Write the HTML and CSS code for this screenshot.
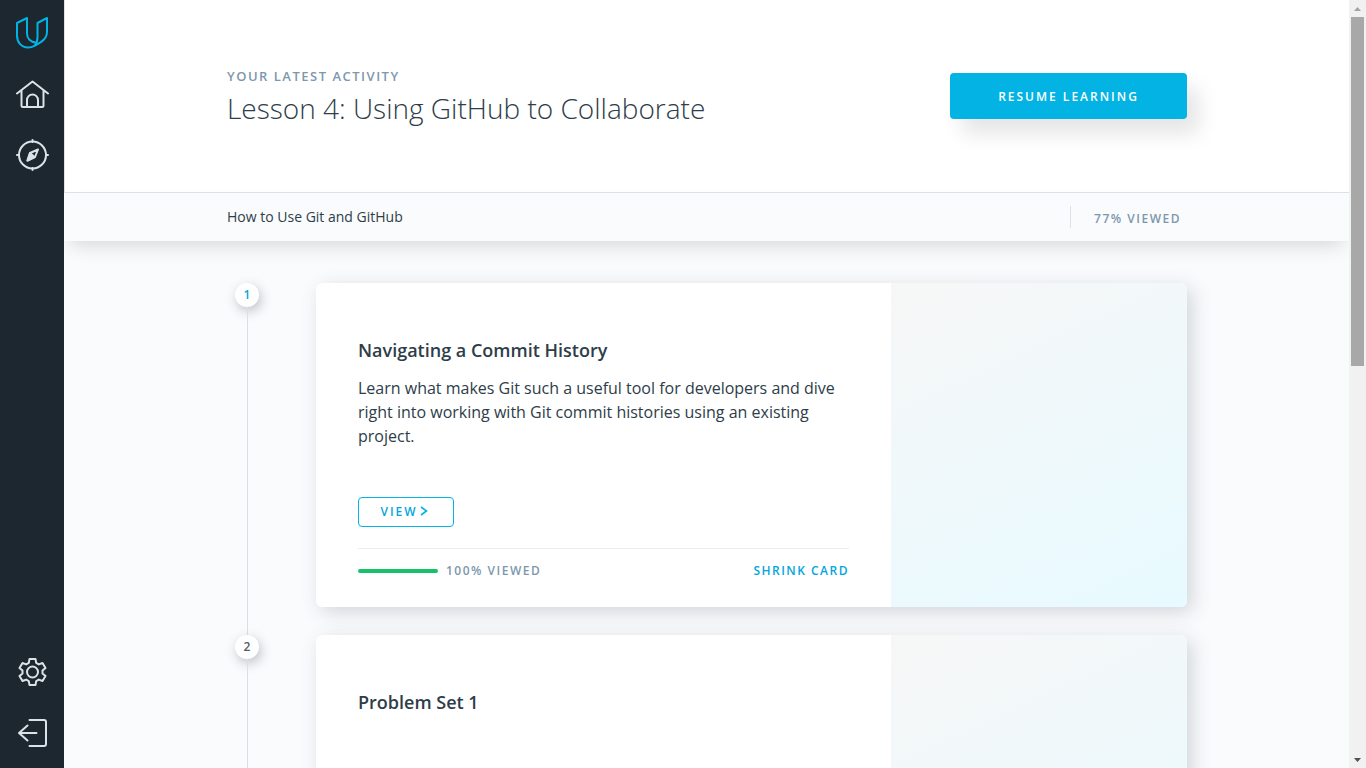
FILE: index.html
```html
<!DOCTYPE html>
<html lang="en">
<head>
<meta charset="utf-8">
<meta name="viewport" content="width=device-width, initial-scale=1">
<title>How to Use Git and GitHub</title>
<link rel="stylesheet" href="styles.css">
</head>
<body>
<div class="app">
  <nav class="sidebar" aria-label="Main">
    <div class="sidebar-group">
      <a class="nav-link logo" href="#" aria-label="Udacity">
        <svg width="34" height="34" viewBox="0 0 34 34"><path d="M2 7 12 2v15.500c0 5 3.500 8.800 9 9M2 7v12.500C2 26.500 6.500 31.500 13 31.500c2.500 0 4.500-.6 6.500-1.700l6-3.500c4-2.400 6.500-6 6.500-10.300V2L22.500 7v14.500c0 3.500-1 6-3 8.300"/></svg>
      </a>
      <a class="nav-link" href="#" aria-label="Home">
        <svg width="34" height="34" viewBox="0 0 34 34"><path d="M2 16.500 17.500 4.500 33 16.500M6.500 13.500v15q0 1.500 1.500 1.500h19q1.500 0 1.500-1.500v-15M12 30v-7a5.500 5.500 0 0 1 11 0v7"/></svg>
      </a>
      <a class="nav-link" href="#" aria-label="Explore">
        <svg width="34" height="34" viewBox="0 0 34 34"><circle cx="17.500" cy="17" r="13.500"/><path d="M17.500 2v2M17.500 30v2M2 17h2M31 17h2"/><path d="M23 11.500 20 19l-7.500 3.500L15 15z"/><path class="solid" d="M12.500 22.500 15 15l4.500 4z"/></svg>
      </a>
    </div>
    <div class="sidebar-group">
      <a class="nav-link" href="#" aria-label="Settings">
        <svg width="34" height="34" viewBox="0 0 34 34"><circle cx="17.500" cy="17" r="5.500"/><path d="M14.500 4h6l.7 3.900 2.600 1.500 3.700-1.400 3 5-3 2.600v2.800l3 2.600-3 5-3.700-1.400-2.600 1.500-.7 3.900h-6l-.7-3.900-2.600-1.500-3.700 1.400-3-5 3-2.600v-2.800l-3-2.600 3-5 3.700 1.400 2.600-1.500z"/></svg>
      </a>
      <a class="nav-link" href="#" aria-label="Sign out">
        <svg width="34" height="34" viewBox="0 0 34 34"><path d="M14.500 4h14.500q2 0 2 2v22q0 2-2 2H14.500M21.500 17H4.500M12.500 9.500 4 17l8.500 7.500"/></svg>
      </a>
    </div>
  </nav>

  <div class="page">
    <header class="hero">
      <div class="container hero-row">
        <div>
          <p class="eyebrow">Your latest activity</p>
          <h1 class="hero-title">Lesson 4: Using GitHub to Collaborate</h1>
        </div>
        <button class="resume" type="button">Resume learning</button>
      </div>
    </header>
    <div class="course-bar">
      <div class="container course-row">
        <h2 class="course-name">How to Use Git and GitHub</h2>
        <span class="course-progress">77% viewed</span>
      </div>
    </div>

    <main class="lessons">
      <div class="container">
        <section class="lesson">
          <div class="step"><span class="step-number step-current">1</span></div>
          <article class="card">
            <div class="card-body">
              <h3 class="card-title">Navigating a Commit History</h3>
              <p class="card-text">Learn what makes Git such a useful tool for developers and dive right into working with Git commit histories using an existing project.</p>
              <button class="view" type="button">View<svg width="8" height="10" viewBox="0 0 8 10"><path d="M1 1l5.500 4L1 9"/></svg></button>
              <footer class="card-footer">
                <span class="meter"></span>
                <span class="viewed">100% viewed</span>
                <button class="shrink" type="button">Shrink card</button>
              </footer>
            </div>
            <div class="card-art"></div>
          </article>
        </section>
        <section class="lesson">
          <div class="step"><span class="step-number">2</span></div>
          <article class="card">
            <div class="card-body">
              <h3 class="card-title">Problem Set 1</h3>
            </div>
            <div class="card-art"></div>
          </article>
        </section>
      </div>
    </main>
  </div>

  <div class="scrollbar" aria-hidden="true">
    <svg class="arrow-up" width="17" height="17" viewBox="0 0 17 17"><path d="M5 11 8.500 7 12 11z"/></svg>
    <div class="track"><div class="thumb"></div></div>
    <svg class="arrow-down" width="17" height="17" viewBox="0 0 17 17"><path d="M5 7h7l-3.500 4z"/></svg>
  </div>
</div>
</body>
</html>
```

FILE: styles.css
```css
* { box-sizing: border-box; }

body {
  margin: 0;
  background: #fafbfd;
  color: #2e3d49;
  font-family: "Open Sans", sans-serif;
  font-size: 16px;
  line-height: 24px;
}

h1, h2, h3, p { margin: 0; }

button {
  font-family: inherit;
  text-transform: uppercase;
  cursor: pointer;
}

svg { display: block; }

.app {
  display: grid;
  grid-template-columns: 64px minmax(0, 1fr) 17px;
  height: 100vh;
  overflow: hidden;
}

/* Sidebar */
.sidebar {
  display: flex;
  flex-direction: column;
  justify-content: space-between;
  padding: 2px 0 5px;
  background: #1d272f;
}

.nav-link {
  display: flex;
  align-items: center;
  justify-content: center;
  height: 61px;
}

.nav-link svg {
  fill: none;
  stroke: #dbe2e8;
  stroke-width: 2;
  stroke-linejoin: round;
  stroke-linecap: round;
}

.logo svg { stroke: #02b3e4; }
.nav-link .solid { fill: #dbe2e8; }

/* Page header */
.page {
  display: flex;
  flex-direction: column;
  min-width: 0;
  overflow: hidden;
}

.container {
  width: 100%;
  max-width: 960px;
  margin: 0 auto;
}

.hero {
  padding: 64px 0;
  background: #fff;
  border-bottom: 1px solid #dbe2e8;
  border-left: 1px solid #dbe2e8;
}

.hero-row {
  display: flex;
  align-items: center;
  justify-content: space-between;
}

.eyebrow {
  color: #7d97ad;
  font-size: 13px;
  font-weight: 600;
  letter-spacing: 1.5px;
  text-transform: uppercase;
}

.hero-title {
  font-size: 28px;
  font-weight: 300;
  line-height: 40px;
}

.resume {
  width: 237px;
  height: 46px;
  border: 0;
  border-radius: 4px;
  background: #02b3e4;
  box-shadow: 12px 15px 20px rgba(0, 0, 0, 0.1);
  color: #fff;
  font-size: 12px;
  font-weight: 600;
  letter-spacing: 2px;
}

.course-bar {
  position: relative;
  padding-left: 1px;
  background: #fafbfd;
  box-shadow: 0 10px 20px -6px rgba(0, 0, 0, 0.15);
}

.course-row {
  display: flex;
  align-items: center;
  justify-content: space-between;
  height: 48px;
}

.course-name {
  font-size: 14px;
  font-weight: 400;
}

.course-progress {
  height: 22px;
  padding: 0 6px 0 23px;
  border-left: 1px solid #dbe2e8;
  color: #7d97ad;
  font-size: 12px;
  font-weight: 600;
  letter-spacing: 1.5px;
  line-height: 26px;
  text-transform: uppercase;
}

/* Lessons */
.lessons { padding: 42px 0 0 1px; }

.lesson {
  display: grid;
  grid-template-columns: 40px minmax(0, 1fr);
  column-gap: 49px;
}

.step {
  display: flex;
  flex-direction: column;
  align-items: center;
}

.step::after {
  content: "";
  flex: 1;
  width: 1px;
  background: #dbdfe3;
}

.step-number {
  width: 24px;
  border-radius: 50%;
  background: #fff;
  box-shadow: 2px 4px 12px rgba(46, 61, 73, 0.3);
  color: #525c65;
  font-size: 12px;
  font-weight: 600;
  text-align: center;
}

.step-current { color: #02a6dc; }

.card {
  display: grid;
  grid-template-columns: minmax(0, 1fr) 296px;
  min-height: 324px;
  margin-bottom: 28px;
  border-radius: 6px;
  background: #fff;
  box-shadow: 5px 5px 20px rgba(46, 61, 73, 0.2);
}

.card-body {
  display: flex;
  flex-direction: column;
  align-items: flex-start;
  padding: 55px 42px 24px;
}

.card-title {
  font-size: 18px;
  font-weight: 600;
}

.card-text {
  margin: 14px 0 49px;
}

.view {
  display: flex;
  align-items: center;
  justify-content: center;
  gap: 2px;
  width: 96px;
  height: 30px;
  padding: 0 4px 2px 0;
  border: 1px solid #02b3e4;
  border-radius: 4px;
  background: #fff;
  color: #02a6dc;
  font-size: 12px;
  font-weight: 600;
  letter-spacing: 2px;
}

.view svg {
  fill: none;
  stroke: #02b3e4;
  stroke-width: 1.6;
}

.card-footer {
  display: flex;
  align-items: center;
  gap: 8px;
  width: 100%;
  margin-top: 21px;
  padding-top: 10px;
  border-top: 1px solid #e9eef2;
  color: #7d97ad;
  font-size: 12px;
  font-weight: 600;
  letter-spacing: 1.5px;
  text-transform: uppercase;
}

.meter {
  width: 80px;
  height: 4px;
  border-radius: 2px;
  background: #15c26b;
}

.shrink {
  margin-left: auto;
  padding: 0;
  border: 0;
  background: none;
  color: #02a6dc;
  font-size: 12px;
  font-weight: 600;
  line-height: 24px;
  letter-spacing: 1.5px;
}

.card-art {
  border-radius: 0 6px 6px 0;
  background: linear-gradient(155deg, #f7f7f7, #e7faff);
}

/* Scrollbar */
.scrollbar {
  display: flex;
  flex-direction: column;
  background: #f1f1f1;
}

.track {
  flex: 1;
  padding: 0 2px;
}

.thumb {
  height: 47.5%;
  background: #a8a8a8;
}

.arrow-up { fill: #a3a3a3; }
.arrow-down { fill: #505050; }
```
